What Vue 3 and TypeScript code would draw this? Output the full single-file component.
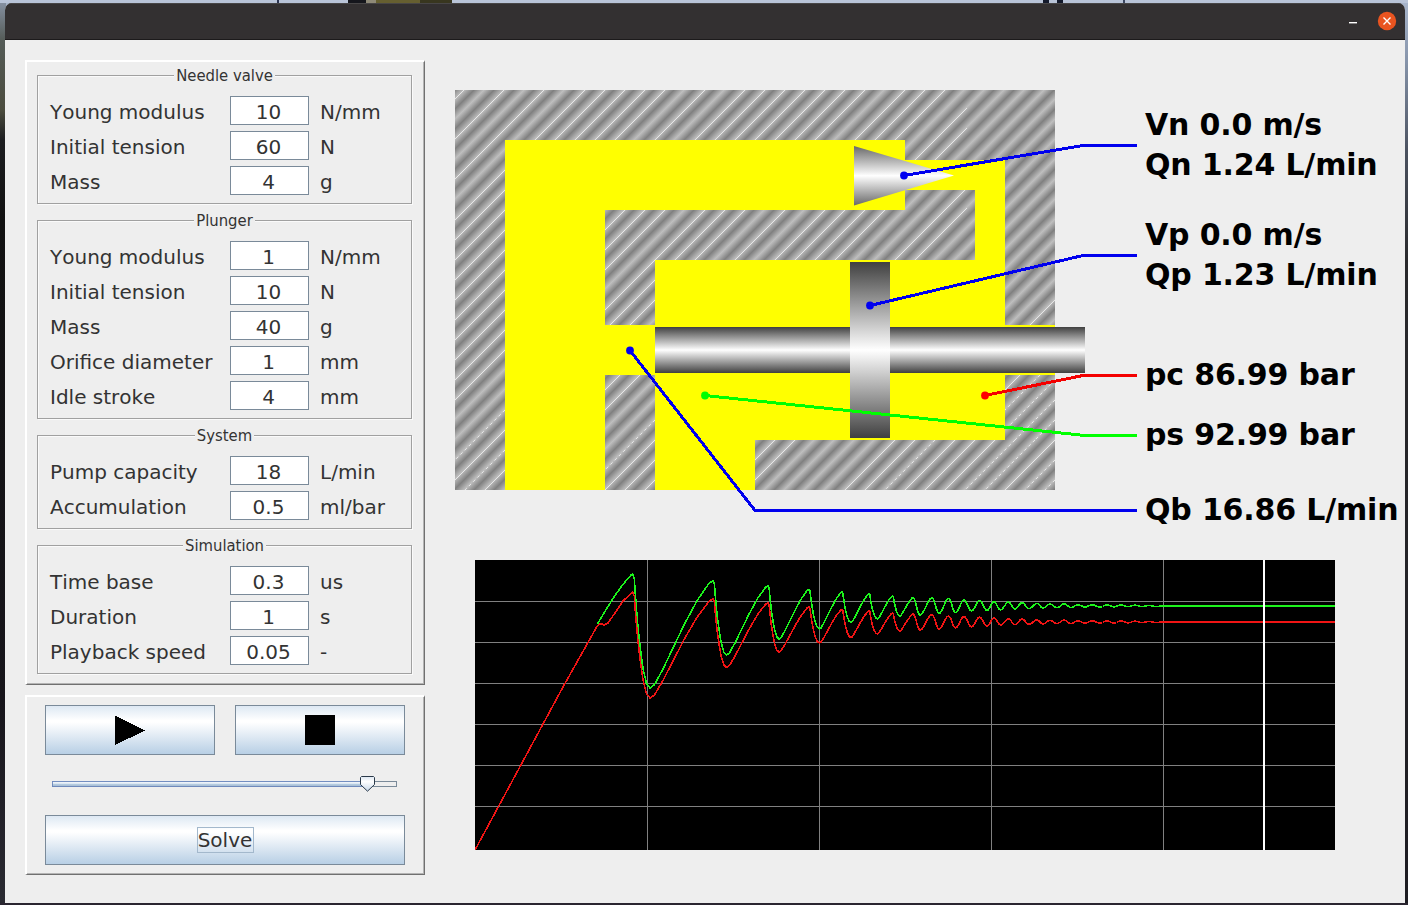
<script setup lang="ts">
interface Field { label: string; value: string; unit: string }
interface Group { title: string; fields: Field[] }
type Point = [number, number]

const f = (label: string, value: string, unit: string): Field => ({ label, value, unit })

const groups: Group[] = [
  { title: 'Needle valve', fields: [f('Young modulus', '10', 'N/mm'), f('Initial tension', '60', 'N'), f('Mass', '4', 'g')] },
  {
    title: 'Plunger',
    fields: [
      f('Young modulus', '1', 'N/mm'),
      f('Initial tension', '10', 'N'),
      f('Mass', '40', 'g'),
      f('Orifice diameter', '1', 'mm'),
      f('Idle stroke', '4', 'mm'),
    ],
  },
  { title: 'System', fields: [f('Pump capacity', '18', 'L/min'), f('Accumulation', '0.5', 'ml/bar')] },
  { title: 'Simulation', fields: [f('Time base', '0.3', 'us'), f('Duration', '1', 's'), f('Playback speed', '0.05', '-')] },
]

const readouts = [
  { text: 'Vn 0.0 m/s', y: 135 },
  { text: 'Qn 1.24 L/min', y: 175 },
  { text: 'Vp 0.0 m/s', y: 245 },
  { text: 'Qp 1.23 L/min', y: 285 },
  { text: 'pc 86.99 bar', y: 385 },
  { text: 'ps 92.99 bar', y: 445 },
  { text: 'Qb 16.86 L/min', y: 520 },
]

const leaders = [
  { color: '#0000ee', points: '904,175.5 1083,145.5 1137,145.5' },
  { color: '#0000ee', points: '870,305.5 1083,255.5 1137,255.5' },
  { color: '#0000ee', points: '630,350.5 755,510.5 1137,510.5' },
  { color: '#00ff00', points: '705,395.5 1085,435.5 1137,435.5' },
  { color: '#f40000', points: '985,395.5 1083,375.5 1137,375.5' },
]

const dots = [
  { x: 904, y: 175.5, color: '#0000f0' },
  { x: 870, y: 305.5, color: '#0000f0' },
  { x: 630, y: 350.5, color: '#0000f0' },
  { x: 705, y: 395.5, color: '#00ff00' },
  { x: 985, y: 395.5, color: '#ff0000' },
]

// Highlight hairlines run along x + y = const, clipped to each piece of the body.
interface Hatch { x: number; y: number; w: number; h: number; solid: number[]; dashed: number[] }
const hatches: Hatch[] = [
  { x: 0, y: 0, w: 512, h: 50, solid: [9, 49, 89, 130, 150, 170, 190, 210, 250, 290, 310, 330, 350, 370, 390, 410, 450, 470, 490, 530, 550], dashed: [] },
  { x: 450, y: 50, w: 62, h: 20, solid: [530, 550], dashed: [] },
  { x: 0, y: 50, w: 50, h: 350, solid: [89, 130, 150, 170, 190, 210, 230, 250, 270, 290, 310, 390, 430, 450], dashed: [370, 410] },
  { x: 150, y: 120, w: 362, h: 50, solid: [290, 310, 330, 370, 390, 410, 450, 490, 510, 530, 550, 610, 630], dashed: [] },
  { x: 450, y: 100, w: 62, h: 20, solid: [610, 630], dashed: [] },
  { x: 150, y: 170, w: 50, h: 65, solid: [330, 370, 390, 410], dashed: [] },
  { x: 150, y: 285, w: 50, h: 115, solid: [450, 470, 550, 570, 590], dashed: [530] },
  { x: 300, y: 350, w: 300, h: 50, solid: [670, 690, 790, 810, 850, 870, 890, 950], dashed: [830, 910, 930, 970, 990] },
  { x: 550, y: 70, w: 50, h: 165, solid: [810], dashed: [] },
  { x: 550, y: 285, w: 50, h: 65, solid: [850], dashed: [870, 890, 910, 930, 950] },
]
const hatchLine = (h: Hatch, s: number) => {
  const xa = Math.min(h.x + h.w, s - h.y)
  const xb = Math.max(h.x, s - h.y - h.h)
  return { x1: 455 + xa, y1: 90 + s - xa, x2: 455 + xb, y2: 90 + s - xb, hidden: xa <= xb }
}
const hairlines = hatches
  .flatMap(h => [
    ...h.solid.map(s => ({ ...hatchLine(h, s), dash: 'none' })),
    ...h.dashed.map(s => ({ ...hatchLine(h, s), dash: '3 3' })),
  ])
  .filter(l => !l.hidden)

const peakX = [632.5, 713, 768, 809, 842, 869, 892.5, 913, 932, 948.5, 964, 979.5, 994, 1008.5, 1022, 1037, 1050, 1064, 1078, 1092, 1107, 1121, 1135, 1149]
const troughX = [650, 726.5, 779, 819.5, 851, 877.5, 900, 920, 939, 955.5, 971.5, 987, 1000.5, 1015, 1029, 1043, 1057, 1071, 1085, 1100, 1114, 1128, 1142, 1156]
const supply = {
  peaks: [574, 581, 586, 589.5, 592, 594, 596, 597.5, 597.7, 598.5, 600, 600.5, 601.7, 602, 602.7, 603.5, 604, 603.8, 604.8, 604.8, 605, 605, 605.2, 605.5],
  troughs: [688, 655, 639, 629, 622.5, 619, 616, 615, 613.5, 612.5, 611, 610.5, 610, 609, 608.5, 608, 607.7, 607.5, 607, 607, 606.8, 606.7, 606.6, 606.5],
}
const chamber = {
  peaks: [592, 599, 603, 607, 609.5, 611, 613, 614, 614.5, 616, 616.5, 617, 618, 619, 619, 620, 620.3, 620, 620.7, 620.8, 621, 621, 621.2, 621.4],
  troughs: [698, 667.5, 652, 643, 637.5, 634, 631, 630, 629, 628, 627, 626, 625, 624.7, 624.3, 624, 623.6, 623.6, 623.2, 623, 623, 622.8, 622.6, 622.5],
}

// Early cycles drop steeply and climb almost linearly; later ones settle into sine-like ripples.
function trace(start: Point[], wave: { peaks: number[]; troughs: number[] }, level: number): string {
  const pts: Point[] = [...start]
  const fall: Point[] = [[0.1, 0.04], [0.17, 0.2], [0.3, 0.45], [0.45, 0.66], [0.6, 0.83], [0.8, 0.96], [1, 1]]
  const rise: Point[] = [[0.07, 0.03], [0.2, 0.17], [0.55, 0.6], [0.75, 0.82], [0.94, 0.98]]
  const ripple: Point[] = [[0.15, 0.05], [0.35, 0.27], [0.5, 0.5], [0.65, 0.73], [0.85, 0.95]]
  wave.peaks.forEach((py, i) => {
    const px = peakX[i]
    const tx = troughX[i]
    const ty = wave.troughs[i]
    pts.push([px, py])
    const down: Point[] = i < 7 ? fall : [...ripple, [1, 1]]
    down.forEach(([u, v]) => pts.push([px + u * (tx - px), py + v * (ty - py)]))
    if (i + 1 < wave.peaks.length) {
      const up = i < 7 ? rise : ripple
      up.forEach(([u, v]) => pts.push([tx + u * (peakX[i + 1] - tx), ty + v * (wave.peaks[i + 1] - ty)]))
    }
  })
  pts.push([1163, level], [1335, level])
  return pts.map(([x, y]) => `${x.toFixed(1)},${y.toFixed(1)}`).join(' ')
}

const greenTrace = trace([[597.5, 624], [604, 613], [612, 600], [622, 585.5], [631, 575]], supply, 606)
const redTrace = trace([[475, 850], [563, 687], [597.5, 625.5], [601, 623.5], [604, 625], [608, 623], [615, 613], [623, 601], [631, 593.5]], chamber, 622)

const gridX = [647.5, 819.5, 991.5, 1163.5]
const gridY = [601.5, 642.5, 683.5, 724.5, 765.5, 806.5]
</script>

<template>
  <div class="desktop">
    <div class="window">
      <header class="titlebar">
        <svg class="controls" width="50" height="24" viewBox="0 0 50 24">
          <rect x="0" y="12" width="8" height="1.4" fill="#fff" />
          <circle cx="38" cy="11" r="9.2" fill="#e95420" />
          <path d="M34.5 7.5l7 7M41.5 7.5l-7 7" stroke="#fff" stroke-width="1.4" />
        </svg>
      </header>
      <main class="content">
        <aside class="sidebar">
          <section class="panel settings">
            <div v-for="g in groups" :key="g.title" class="group">
              <div class="caption"><span>{{ g.title }}</span></div>
              <div v-for="row in g.fields" :key="row.label" class="row">
                <span class="label">{{ row.label }}</span>
                <span class="field">{{ row.value }}</span>
                <span class="unit">{{ row.unit }}</span>
              </div>
            </div>
          </section>
          <section class="panel playback">
            <div class="buttons">
              <button class="btn" aria-label="Play">
                <svg width="30" height="30" viewBox="0 0 30 30"><path d="M0 0.5L30 15.5L0 30z" fill="#000" shape-rendering="crispEdges" /></svg>
              </button>
              <button class="btn" aria-label="Stop">
                <svg width="30" height="30" viewBox="0 0 30 30"><rect width="30" height="30" fill="#000" /></svg>
              </button>
            </div>
            <svg class="slider" width="360" height="60" viewBox="45 755 360 60">
              <defs>
                <linearGradient id="track" x1="0" y1="0" x2="0" y2="1">
                  <stop offset="0" stop-color="#c8d8ec" /><stop offset=".3" stop-color="#fff" />
                  <stop offset=".5" stop-color="#b8cfe5" /><stop offset="1" stop-color="#a3b8cc" />
                </linearGradient>
                <linearGradient id="thumb" x1="0" y1="0" x2="0" y2="1">
                  <stop offset="0" stop-color="#dce6f1" /><stop offset=".35" stop-color="#fff" /><stop offset="1" stop-color="#c5d6e8" />
                </linearGradient>
              </defs>
              <rect x="52.5" y="781.5" width="344" height="5" fill="#eee" stroke="#7a8a99" />
              <rect x="52.5" y="781.5" width="314" height="5" fill="url(#track)" stroke="#6382bf" stroke-opacity=".75" />
              <path d="M361.5 776.5H373.5L374.5 777.5V784.5L367.5 791.2L360.5 784.5V777.5z" fill="url(#thumb)" stroke="#2b3a4a" />
            </svg>
            <button class="btn solve"><span>Solve</span></button>
          </section>
        </aside>
        <div class="views">
          <svg class="diagram" width="960" height="480" viewBox="445 60 960 480">
            <defs>
              <linearGradient id="metal" gradientUnits="userSpaceOnUse" x1="454.5" y1="89.5" x2="459.5" y2="94.5" spreadMethod="reflect">
                <stop offset="0" stop-color="#808080" /><stop offset="1" stop-color="#bebebe" />
              </linearGradient>
              <linearGradient id="steel" x1="0" y1="0" x2="0" y2="1">
                <stop offset="0" stop-color="#404040" /><stop offset=".5" stop-color="#fff" /><stop offset="1" stop-color="#404040" />
              </linearGradient>
              <linearGradient id="cone" x1="0" y1="0" x2="0" y2="1">
                <stop offset="0" stop-color="#686868" /><stop offset=".5" stop-color="#fff" /><stop offset="1" stop-color="#686868" />
              </linearGradient>
            </defs>
            <rect x="455" y="90" width="600" height="400" fill="url(#metal)" />
            <line v-for="(l, i) in hairlines" :key="i" :x1="l.x1" :y1="l.y1" :x2="l.x2" :y2="l.y2" :stroke-dasharray="l.dash" stroke="#f4f4f4" stroke-width=".8" />
            <g fill="#ff0" shape-rendering="crispEdges">
              <path d="M505 140H905V160H1005V325H1055V375H1005V440H755V490H655V375H605V490H505z M605 210V325H655V260H975V190H905V210z" fill-rule="evenodd" />
            </g>
            <path d="M854 146L954 175.5L854 205.5z" fill="url(#cone)" />
            <rect x="655" y="327" width="430" height="46" fill="url(#steel)" />
            <rect x="850" y="262" width="40" height="176" fill="url(#steel)" />
            <polyline v-for="l in leaders" :key="l.points" :points="l.points" fill="none" :stroke="l.color" stroke-width="3" shape-rendering="crispEdges" />
            <circle v-for="d in dots" :key="d.x" :cx="d.x" :cy="d.y" r="3.9" :fill="d.color" />
            <text v-for="r in readouts" :key="r.text" x="1145" :y="r.y" class="readout">{{ r.text }}</text>
          </svg>
          <svg class="chart" width="860" height="290" viewBox="475 560 860 290">
            <rect x="475" y="560" width="860" height="290" fill="#000" />
            <g stroke="#808080" stroke-width="1">
              <line v-for="x in gridX" :key="x" :x1="x" :x2="x" y1="560" y2="850" />
              <line v-for="y in gridY" :key="y" x1="475" x2="1335" :y1="y" :y2="y" />
            </g>
            <g fill="none" stroke-width="1.6" shape-rendering="crispEdges" stroke-linejoin="round">
              <polyline :points="greenTrace" stroke="#1cf41c" />
              <polyline :points="redTrace" stroke="#f01414" />
            </g>
            <rect x="1263" y="560" width="2" height="290" fill="#fff" />
          </svg>
        </div>
      </main>
    </div>
  </div>
</template>

<style>
body { margin: 0; overflow: hidden; }
</style>

<style scoped>
.desktop {
  box-sizing: border-box;
  width: 1408px;
  height: 905px;
  padding: 3px 3px 2px 5px;
  font-family: "DejaVu Sans", sans-serif;
  font-kerning: none;
  color: #333;
  background:
    linear-gradient(90deg, transparent 277px, #2b3350 277px 279px, transparent 279px 348px, #15161c 348px 366px, #8f8a78 366px 376px, #665f30 376px 420px, #38361f 420px 452px, transparent 452px 1043px, #141a2c 1043px 1049px, transparent 1049px 1057px, #141a2c 1057px 1063px, transparent 1063px 1123px, #3b4660 1123px 1125px, transparent 1125px) 0 0 / 1408px 3px no-repeat,
    linear-gradient(#b9c4d8, #b9c4d8) 0 0 / 1408px 3px no-repeat,
    linear-gradient(#2a2530, #2a2530) 0 903px / 1408px 2px no-repeat,
    linear-gradient(#8994a6 0, #555c58 40px, #4b4c3e 110px, #1c1d20 140px, #111 220px, #17151b 700px, #2a2a32 900px) 0 0 / 6px 905px no-repeat,
    linear-gradient(#a9b6cc 0, #8795ab 60px, #4b5260 150px, #29292c 260px, #1d1c22 905px);
}
.window {
  width: 1400px;
  height: 900px;
  background: #eee;
  border-radius: 7px 7px 0 0;
  overflow: hidden;
}
.titlebar {
  box-sizing: border-box;
  height: 37px;
  display: flex;
  justify-content: flex-end;
  padding: 6px 6px 0 0;
  background: #333031;
  border-top: 1px solid #484647;
  border-bottom: 1px solid #1c1a1b;
}
.controls { display: block; }
.content { display: flex; padding: 20px 0 0 20px; }
.sidebar { width: 400px; display: flex; flex-direction: column; gap: 10px; }
.panel {
  box-sizing: border-box;
  border-style: solid;
  border-width: 2px 1px 1px 2px;
  border-color: #fff #707070 #707070 #fff;
  box-shadow: inset -1px -1px 0 #b4b4b4;
}
.settings {
  height: 625px;
  padding: 13px 12px 0 10px;
  display: flex;
  flex-direction: column;
  gap: 16px;
}
.group {
  box-sizing: border-box;
  border: 1px solid #a0a0a0;
  box-shadow: 1px 1px 0 #fafafa, inset 1px 1px 0 #fafafa;
  padding: 0 0 8px 12px;
}
.caption {
  height: 21px;
  margin: -1px 0 0 -12px;
  display: flex;
  justify-content: center;
}
.caption span {
  height: 20px;
  line-height: 21px;
  margin-top: -10px;
  padding: 0 2px;
  background: #eee;
  font-family: "DejaVu Sans Condensed", "DejaVu Sans", sans-serif;
  font-size: 16.5px;
  font-stretch: condensed;
  white-space: nowrap;
}
.row { display: grid; grid-template-columns: 180px 79px 1fr; height: 35px; font-size: 20px; line-height: 32px; }
.row:last-child { height: 29px; }
.field {
  box-sizing: border-box;
  height: 29px;
  line-height: 30px;
  border: 1px solid #7a8a99;
  background: #fff;
  text-align: center;
  padding-right: 2px;
}
.unit { padding-left: 11px; }
.playback { height: 180px; padding: 8px 18px; }
.buttons { display: flex; gap: 20px; }
.btn {
  box-sizing: border-box;
  width: 170px;
  height: 50px;
  padding: 0;
  border: 1px solid #7a8a99;
  border-radius: 0;
  background: linear-gradient(#dde8f3 0, #fff 30%, #fff 34%, #b8cfe5 100%);
  display: flex;
  align-items: center;
  justify-content: center;
  font: 20px "DejaVu Sans", sans-serif;
  color: #333;
}
.slider { display: block; }
.solve { width: 360px; }
.solve span { box-sizing: border-box; width: 57px; height: 26px; line-height: 24px; border: 1px solid #a3b8cc; text-align: center; }
.views { width: 960px; margin-left: 20px; display: flex; flex-direction: column; }
.diagram { display: block; }
.chart { display: block; margin: 20px 0 0 30px; }
.readout { font: bold 30px "DejaVu Sans", sans-serif; font-kerning: none; letter-spacing: -0.17px; fill: #000; }
</style>
